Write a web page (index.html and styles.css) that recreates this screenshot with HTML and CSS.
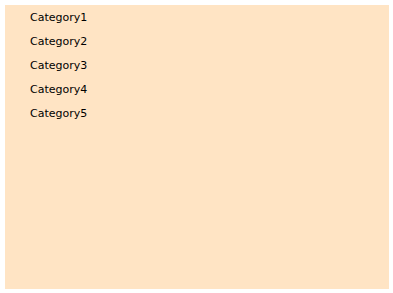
FILE: index.html
```html
<!DOCTYPE html>
<html>
<head>
<meta charset="utf-8">
<link rel="stylesheet" href="styles.css">
</head>
<body>
<div class="panel">
  <ul class="list">
    <li class="item">Category1</li>
    <li class="item">Category2</li>
    <li class="item">Category3</li>
    <li class="item">Category4</li>
    <li class="item">Category5</li>
  </ul>
</div>
</body>
</html>
```
FILE: styles.css
```css
html, body {
  margin: 0;
  padding: 0;
  background: #ffffff;
}
.panel {
  margin: 5px 0 0 5px;
  width: 384px;
  height: 284px;
  background: #ffe4c4;
  box-sizing: border-box;
}
.list {
  list-style: none;
  margin: 0;
  padding: 1px 0 0 25px;
  display: flex;
  flex-direction: column;
}
.item {
  font-family: "DejaVu Sans", Verdana, sans-serif;
  font-size: 11px;
  line-height: 24px;
  height: 24px;
  color: #000;
}
```
